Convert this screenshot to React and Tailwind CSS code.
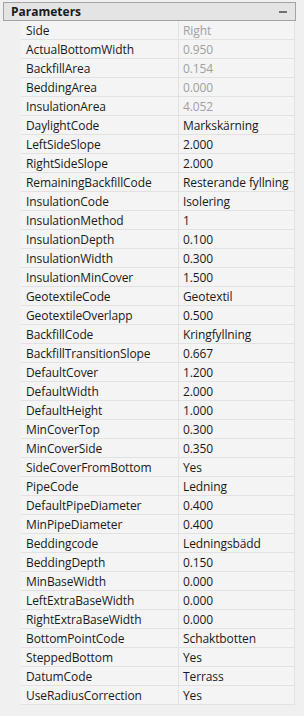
import React from 'react';

const rows = [
  ['Side', 'Right', true],
  ['ActualBottomWidth', '0.950', true],
  ['BackfillArea', '0.154', true],
  ['BeddingArea', '0.000', true],
  ['InsulationArea', '4.052', true],
  ['DaylightCode', 'Markskärning'],
  ['LeftSideSlope', '2.000'],
  ['RightSideSlope', '2.000'],
  ['RemainingBackfillCode', 'Resterande fyllning'],
  ['InsulationCode', 'Isolering'],
  ['InsulationMethod', '1'],
  ['InsulationDepth', '0.100'],
  ['InsulationWidth', '0.300'],
  ['InsulationMinCover', '1.500'],
  ['GeotextileCode', 'Geotextil'],
  ['GeotextileOverlapp', '0.500'],
  ['BackfillCode', 'Kringfyllning'],
  ['BackfillTransitionSlope', '0.667'],
  ['DefaultCover', '1.200'],
  ['DefaultWidth', '2.000'],
  ['DefaultHeight', '1.000'],
  ['MinCoverTop', '0.300'],
  ['MinCoverSide', '0.350'],
  ['SideCoverFromBottom', 'Yes'],
  ['PipeCode', 'Ledning'],
  ['DefaultPipeDiameter', '0.400'],
  ['MinPipeDiameter', '0.400'],
  ['Beddingcode', 'Ledningsbädd'],
  ['BeddingDepth', '0.150'],
  ['MinBaseWidth', '0.000'],
  ['LeftExtraBaseWidth', '0.000'],
  ['RightExtraBaseWidth', '0.000'],
  ['BottomPointCode', 'Schaktbotten'],
  ['SteppedBottom', 'Yes'],
  ['DatumCode', 'Terrass'],
  ['UseRadiusCorrection', 'Yes'],
];

const App = () => {
  return (
    <div
      className="w-[304px] h-[716px] bg-[#f0f0f0] pt-[2px] pl-[3px] pr-[8px] text-[12px] text-[#1a1a1a] overflow-hidden"
      style={{ fontFamily: '"Open Sans", "Noto Sans", sans-serif' }}
    >
      <div className="flex items-center justify-between h-[19px] border border-[#a3a3a3] bg-[#e4e4e4] pl-[7px] pr-[8px]">
        <span className="font-bold leading-none pt-px">Parameters</span>
        <span className="w-[8px] h-[2px] bg-[#707070]" />
      </div>
      <div className="ml-[18px] mr-[1px] border-r border-[#e2e2e2]">
        {rows.map(([name, value, readOnly]) => (
          <div key={name} className="flex h-[19px] border-b border-[#e2e2e2] bg-[#f4f4f4] tracking-[-0.1px]">
            <div className="w-[158px] pl-[5px] pt-px border-r border-[#e2e2e2] leading-[18px] truncate">{name}</div>
            <div className={`flex-1 pl-[4px] pt-px leading-[18px] truncate ${readOnly ? 'text-[#a0a0a0]' : ''}`}>{value}</div>
          </div>
        ))}
      </div>
    </div>
  );
};

export default App;
